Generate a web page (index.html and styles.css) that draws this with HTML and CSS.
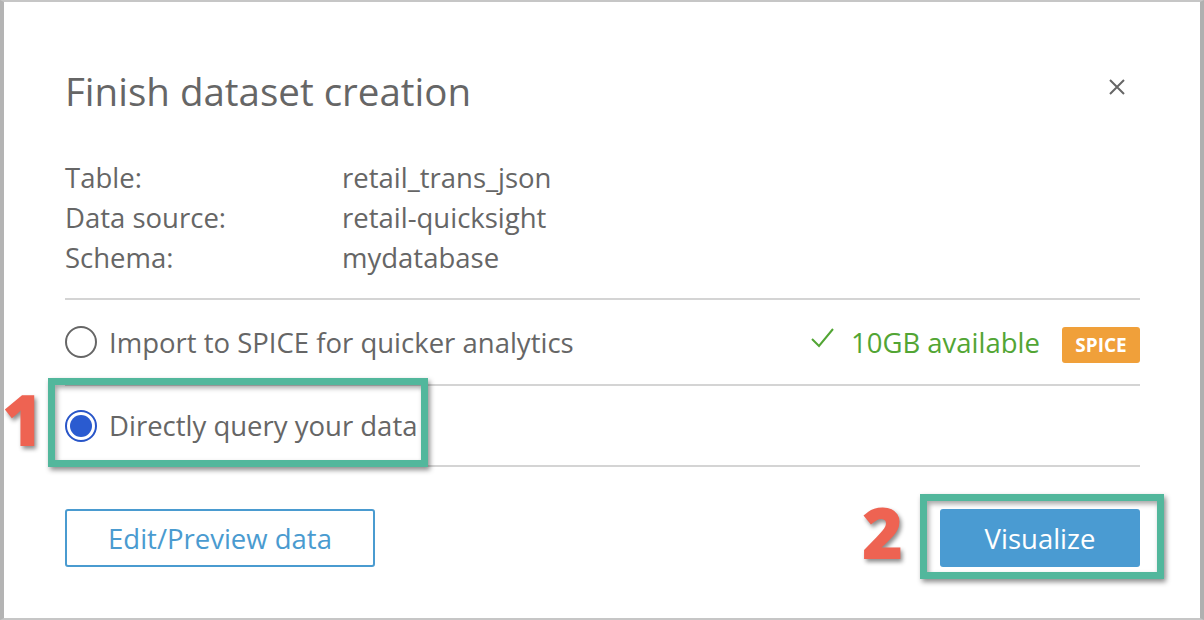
FILE: index.html
```
<!DOCTYPE html>
<html>
<head>
<meta charset="utf-8">
<link rel="stylesheet" href="styles.css">
</head>
<body>
<div class="frame">
  <div class="modal">
    <div class="header">
      <h1 class="title">Finish dataset creation</h1>
      <svg class="close" width="18" height="18" viewBox="0 0 18 18"><path d="M2 2L16 16M16 2L2 16" stroke="#666" stroke-width="2" fill="none"/></svg>
    </div>
    <div class="info">
      <div class="info-row"><span class="label">Table:</span><span class="value">retail_trans_json</span></div>
      <div class="info-row"><span class="label">Data source:</span><span class="value">retail-quicksight</span></div>
      <div class="info-row"><span class="label">Schema:</span><span class="value">mydatabase</span></div>
    </div>
    <div class="option opt1">
      <span class="radio"></span>
      <span class="opt-text">Import to SPICE for quicker analytics</span>
      <span class="avail">
        <svg class="check" width="24" height="22" viewBox="0 0 24 22"><path d="M1 12L8 19L22 2" stroke="#52a534" stroke-width="2" fill="none"/></svg>
        <span class="avail-text">10GB available</span>
        <span class="badge">SPICE</span>
      </span>
    </div>
    <div class="option opt2">
      <span class="radio checked"><span class="dot"></span></span>
      <span class="opt-text">Directly query your data</span>
    </div>
    <div class="footer">
      <button class="btn-outline">Edit/Preview data</button>
      <button class="btn-primary">Visualize</button>
    </div>
  </div>
  <div class="annot box1"></div>
  <div class="annot box2"></div>
  <span class="num num1">1</span>
  <span class="num num2">2</span>
</div>
</body>
</html>
```
FILE: styles.css
```
html, body {
  margin: 0;
  padding: 0;
  background: #a8a8a8;
}
.frame {
  position: relative;
  width: 1196px;
  height: 616px;
  background: #fff;
  border-left: 4px solid #b4b4b4;
  border-top: 2px solid #c6c6c6;
  border-right: 4px solid #b0b0b0;
  border-bottom: 2px solid #c6c6c6;
  font-family: "Open Sans", "Liberation Sans", sans-serif;
  color: #666;
  overflow: hidden;
}
.modal {
  padding: 0 60px 0 61px;
}
.header {
  display: flex;
  justify-content: space-between;
  align-items: center;
  padding-top: 64px;
}
.title {
  margin: 0;
  font-size: 38.5px;
  font-weight: 400;
  line-height: 50px;
  color: #666;
}
.close {
  margin-right: 14px;
  margin-top: -8px;
}
.info {
  padding-top: 42px;
  padding-bottom: 20px;
  border-bottom: 2px solid #d4d4d4;
}
.info-row {
  display: flex;
  font-size: 27.5px;
  line-height: 40px;
  height: 40px;
}
.label {
  width: 277px;
}
.option {
  display: flex;
  align-items: center;
  border-bottom: 2px solid #d4d4d4;
  font-size: 27.5px;
}
.opt1 {
  height: 84px;
}
.opt2 {
  height: 79px;
}
.radio {
  box-sizing: border-box;
  width: 32px;
  height: 32px;
  border: 2px solid #666;
  border-radius: 50%;
  margin-right: 12px;
  display: flex;
  align-items: center;
  justify-content: center;
  flex: none;
}
.radio.checked {
  border: 2px solid #2855c8;
}
.dot {
  width: 22px;
  height: 22px;
  border-radius: 50%;
  background: #2a5bd0;
}
.opt-text {
  color: #666;
}
.avail {
  margin-left: auto;
  display: flex;
  align-items: center;
}
.check {
  margin-right: 16px;
  margin-top: -8px;
}
.avail-text {
  color: #52a534;
  margin-right: 22px;
}
.badge {
  background: #f0a03a;
  color: #fff;
  font-weight: 700;
  font-size: 19px;
  border-radius: 3px;
  width: 78px;
  height: 36px;
  line-height: 36px;
  text-align: center;
  margin-top: 6px;
}
.footer {
  display: flex;
  justify-content: space-between;
  padding-top: 42px;
}
button {
  font-family: "Open Sans", "Liberation Sans", sans-serif;
  font-size: 27.5px;
  cursor: pointer;
  padding: 0;
}
.btn-outline {
  width: 310px;
  height: 58px;
  background: #fff;
  border: 2px solid #4a9bd0;
  border-radius: 3px;
  color: #4a9bd0;
}
.btn-primary {
  width: 200px;
  height: 58px;
  background: #4a9bd2;
  border: none;
  border-radius: 3px;
  color: #fff;
}
.annot {
  position: absolute;
  box-sizing: border-box;
  border: 7px solid #52b79c;
  box-shadow: 2px 3px 5px rgba(0,0,0,0.45), inset 2px 3px 5px rgba(0,0,0,0.35);
}
.box1 {
  left: 44px;
  top: 376px;
  width: 380px;
  height: 89px;
}
.box2 {
  left: 916px;
  top: 492px;
  width: 244px;
  height: 85px;
}
.num {
  position: absolute;
  font-family: "Open Sans", "Liberation Sans", sans-serif;
  font-weight: 800;
  font-size: 70px;
  line-height: 70px;
  color: #ee6352;
  -webkit-text-stroke: 10px #fff;
  paint-order: stroke fill;
  text-shadow: 2px 3px 4px rgba(0,0,0,0.45);
}
.num1 {
  left: -2px;
  top: 382px;
}
.num2 {
  left: 858px;
  top: 495px;
}
```
